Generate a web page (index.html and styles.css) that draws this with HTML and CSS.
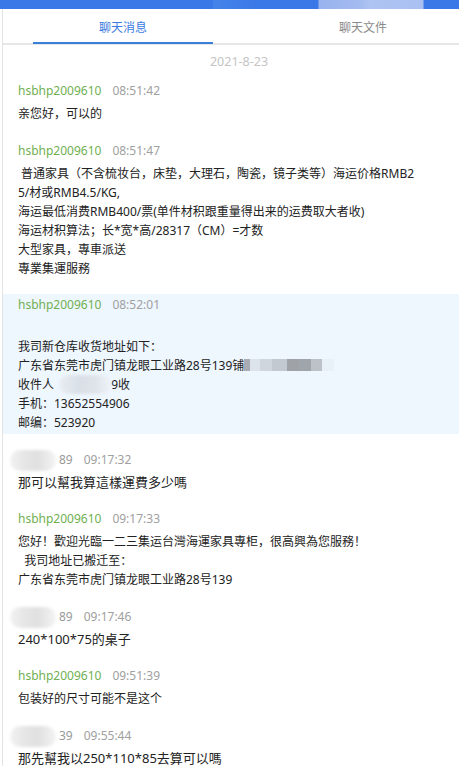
FILE: index.html
```html
<!DOCTYPE html>
<html lang="zh">
<head>
<meta charset="utf-8">
<title>聊天记录</title>
<link rel="stylesheet" href="styles.css">
</head>
<body>
<div class="topbar"></div>
<div class="panel">
  <div class="tabs">
    <div class="tab active">聊天消息</div>
    <div class="tab">聊天文件</div>
  </div>
  <div class="list">
    <div class="date">2021-8-23</div>

    <div class="msg">
      <div class="meta"><span class="name">hsbhp2009610</span><span class="time">08:51:42</span></div>
      <div class="text">亲您好，可以的</div>
    </div>

    <div class="msg">
      <div class="meta"><span class="name">hsbhp2009610</span><span class="time">08:51:47</span></div>
      <div class="text">&nbsp;普通家具（不含梳妆台，床垫，大理石，陶瓷，镜子类等）海运价格RMB2<br>5/材或RMB4.5/KG,<br>海运最低消费RMB400/票(单件材积跟重量得出来的运费取大者收)<br>海运材积算法；长*宽*高/28317（CM）=才数<br>大型家具，專車派送<br>專業集運服務</div>
    </div>

    <div class="msg highlight">
      <div class="meta"><span class="name">hsbhp2009610</span><span class="time">08:52:01</span></div>
      <div class="text"><br>我司新仓库收货地址如下：<br>广东省东莞市虎门镇龙眼工业路28号139铺<span class="mosaic"></span><br>收件人 <span class="blob"></span>9收<br>手机：13652554906<br>邮编：523920</div>
    </div>

    <div class="msg">
      <div class="meta"><span class="cname"><span class="blur"></span>89</span><span class="time">09:17:32</span></div>
      <div class="text big">那可以幫我算這樣運費多少嗎</div>
    </div>

    <div class="msg">
      <div class="meta"><span class="name">hsbhp2009610</span><span class="time">09:17:33</span></div>
      <div class="text">您好！歡迎光臨一二三集运台灣海運家具專柜，很高興為您服務！<br>&nbsp;&nbsp;我司地址已搬迁至：<br>广东省东莞市虎门镇龙眼工业路28号139</div>
    </div>

    <div class="msg">
      <div class="meta"><span class="cname"><span class="blur"></span>89</span><span class="time">09:17:46</span></div>
      <div class="text big">240*100*75的桌子</div>
    </div>

    <div class="msg">
      <div class="meta"><span class="name">hsbhp2009610</span><span class="time">09:51:39</span></div>
      <div class="text">包装好的尺寸可能不是这个</div>
    </div>

    <div class="msg">
      <div class="meta"><span class="cname"><span class="blur"></span>39</span><span class="time">09:55:44</span></div>
      <div class="text big">那先幫我以250*110*85去算可以嗎</div>
    </div>
  </div>
</div>
</body>
</html>
```

FILE: styles.css
```css
html, body {
  margin: 0;
  padding: 0;
  background: #ffffff;
  overflow: hidden;
}

body {
  font-family: "Noto Sans", "Noto Sans CJK SC", sans-serif;
  color: #222222;
  width: 459px;
  height: 766px;
}

.topbar {
  height: 9px;
  background:
    linear-gradient(to right,
      #3b78e7 0px, #3b78e7 212px,
      #4583ea 214px, #3f7ce8 245px,
      #3b78e7 260px, #3b78e7 318px,
      #98b3ee 319px, #a3bbef 360px,
      #aec4f2 370px, #a9c0f1 423px,
      #3b78e7 424px, #3b78e7 100%);
}

.panel {
  margin-left: 2px;
  border-left: 1px solid #e3e3e3;
  width: 456px;
  height: 757px;
  overflow: hidden;
}

.tabs {
  display: flex;
  width: 480px;
  height: 34px;
  border-bottom: 2px solid #e6e6e6;
}

.tab {
  flex: 0 0 240px;
  display: flex;
  align-items: center;
  justify-content: center;
  padding-top: 1px;
  font-size: 12px;
  color: #8a8a8a;
  position: relative;
}

.tab.active {
  color: #3a7be2;
}

.tab.active::after {
  content: "";
  position: absolute;
  left: 30px;
  right: 30px;
  bottom: -1px;
  height: 2px;
  background: #3a7fdc;
}

.list {
  width: 472px;
}

.date {
  text-align: center;
  font-size: 12.5px;
  line-height: 20px;
  color: #c4c4c4;
  padding: 7px 0 8px;
}

.msg {
  padding: 0 0 2px 15px;
  margin-bottom: 14.5px;
}

.msg.highlight {
  background: #eef6fe;
}

.meta {
  height: 22px;
  line-height: 22px;
  font-size: 12px;
  white-space: nowrap;
}

.name {
  color: #70b052;
}

.cname {
  color: #9a9a9a;
}

.time {
  color: #a0a0a0;
  margin-left: 11px;
}

.text {
  margin-top: 2px;
  font-size: 12px;
  line-height: 19px;
  white-space: nowrap;
}

.text.big {
  font-size: 13px;
}

.blur {
  display: inline-block;
  width: 46px;
  height: 21px;
  margin-left: -8px;
  margin-right: 3px;
  vertical-align: middle;
  border-radius: 11px;
  background: linear-gradient(to right, #f2f2f2 0%, #e6e6e6 30%, #e0e0e0 60%, #ececec 85%, #f4f4f4 100%);
  filter: blur(1.5px);
}

.mosaic {
  display: inline-block;
  width: 90px;
  height: 12px;
  vertical-align: -1px;
  background: linear-gradient(to right,
    #a9adb3 0px, #a9adb3 6px,
    #dde3ea 6px, #dde3ea 16px,
    #d0d6de 16px, #d0d6de 28px,
    #c3c9d1 28px, #c3c9d1 43px,
    #9fa3a8 43px, #9fa3a8 55px,
    #a0a5ab 55px, #a0a5ab 67px,
    #bdc2c9 67px, #bdc2c9 78px,
    #e8f0f8 78px, #e8f0f8 90px);
}

.blob {
  display: inline-block;
  width: 52px;
  height: 19px;
  margin-left: 2px;
  vertical-align: top;
  border-radius: 10px;
  background: linear-gradient(to right, #e8edf2 0%, #d9dfe6 40%, #dfe4ea 70%, #eef3f8 100%);
  filter: blur(1.5px);
}
```
